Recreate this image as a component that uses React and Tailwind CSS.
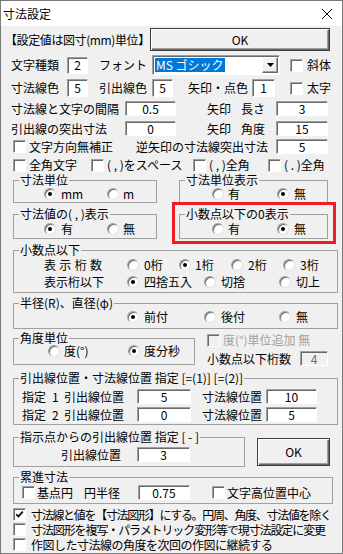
import React from 'react';

const sunken =
  'border border-t-[#a0a0a0] border-l-[#a0a0a0] border-r-white border-b-white shadow-[inset_1px_1px_0_#696969]';
const raised =
  'border border-t-white border-l-white border-r-[#696969] border-b-[#696969] shadow-[inset_-1px_-1px_0_#a0a0a0]';

function Edit({ v, className = '', disabled }) {
  return (
    <div
      className={`shrink-0 flex items-center justify-center ${sunken} ${
        disabled ? 'bg-[#f0f0f0] text-[#6d6d6d]' : 'bg-white'
      } ${className}`}
    >
      {v}
    </div>
  );
}

function Radio({ on }) {
  return (
    <span className="shrink-0 flex items-center justify-center w-[12px] h-[12px] rounded-full bg-white border border-t-[#a0a0a0] border-l-[#a0a0a0] border-r-[#e3e3e3] border-b-[#e3e3e3] shadow-[inset_1px_1px_0_#696969]">
      {on && <span className="w-[4px] h-[4px] rounded-full bg-black" />}
    </span>
  );
}

function Check({ on, disabled }) {
  return (
    <span
      className={`shrink-0 flex items-center justify-center w-[13px] h-[13px] ${sunken} ${
        disabled ? 'bg-[#f0f0f0]' : 'bg-white'
      }`}
    >
      {on && (
        <svg width="9" height="9" viewBox="0 0 9 9">
          <path d="M1.2 4.2 L3.4 6.6 L7.8 1.6" stroke="#000" strokeWidth="1.7" fill="none" />
        </svg>
      )}
    </span>
  );
}

function Group({ label, className = '', children }) {
  return (
    <fieldset className={`shrink-0 border border-[#a0a0a0] ${className}`}>
      <legend className="ml-[5px] px-[1px] leading-[14px] whitespace-nowrap">{label}</legend>
      {children}
    </fieldset>
  );
}

function Btn({ className = '', children }) {
  return (
    <div
      className={`shrink-0 flex items-center justify-center bg-[#f0f0f0] border border-[#3c3c3c] shadow-[inset_1px_1px_0_#fff,inset_-1px_-1px_0_#696969,inset_-2px_-2px_0_#a0a0a0] ${className}`}
    >
      {children}
    </div>
  );
}

export default function App() {
  return (
    <div className="w-[343px] h-[554px] overflow-hidden bg-[#f0f0f0] border border-[#7a7a7a] text-[12px] leading-[14px] text-black font-['Noto_Sans_CJK_JP',sans-serif]">
      {/* title bar */}
      <div className="h-[25px] bg-white flex items-center justify-between pl-[2px] pr-[10px]">
        <span>寸法設定</span>
        <svg width="10" height="10" viewBox="0 0 10 10">
          <path d="M0 0 L10 10 M10 0 L0 10" stroke="#000" strokeWidth="1" />
        </svg>
      </div>

      {/* row 1 */}
      <div className="flex items-center h-[23px] mt-[2px] pl-[4px]">
        <span className="w-[145px] shrink-0 whitespace-nowrap tracking-[-0.4px]">【設定値は図寸(mm)単位】</span>
        <Btn className="w-[180px] h-[23px]">OK</Btn>
      </div>

      {/* row 2 */}
      <div className="flex items-center h-[20px] mt-[4px] pl-[10px]">
        <span className="w-[56px] shrink-0">文字種類</span>
        <Edit v="2" className="w-[21px] h-[17px]" />
        <span className="ml-[11px] w-[53px] shrink-0">フォント</span>
        <div className={`shrink-0 flex items-center w-[128px] h-[20px] bg-white ${sunken}`}>
          <span className="ml-[2px] px-[1px] bg-[#0078d7] text-white leading-[14px]">MS ゴシック</span>
          <div className={`ml-auto mr-[1px] w-[16px] h-[16px] bg-[#f0f0f0] flex items-center justify-center ${raised}`}>
            <svg width="7" height="4" viewBox="0 0 7 4">
              <path d="M0 0 H7 L3.5 4 Z" fill="#000" />
            </svg>
          </div>
        </div>
        <span className="ml-[10px]">
          <Check />
        </span>
        <span className="ml-[4px]">斜体</span>
      </div>

      {/* row 3 */}
      <div className="flex items-center h-[18px] mt-[4px] pl-[10px]">
        <span className="w-[56px] shrink-0">寸法線色</span>
        <Edit v="5" className="w-[21px] h-[18px]" />
        <span className="ml-[11px] w-[53px] shrink-0">引出線色</span>
        <Edit v="5" className="w-[21px] h-[18px]" />
        <span className="ml-[15px] w-[64px] shrink-0">矢印・点色</span>
        <Edit v="1" className="w-[23px] h-[18px]" />
        <span className="ml-[15px]">
          <Check />
        </span>
        <span className="ml-[4px]">太字</span>
      </div>

      {/* row 4 */}
      <div className="flex items-center h-[15px] mt-[4px] pl-[10px]">
        <span className="w-[114px] shrink-0">寸法線と文字の間隔</span>
        <Edit v="0.5" className="w-[51px] h-[15px]" />
        <div className="ml-[31px] w-[69px] shrink-0 flex">
          <span>矢印</span>
          <span className="ml-[10px]">長さ</span>
        </div>
        <Edit v="3" className="w-[52px] h-[15px]" />
      </div>

      {/* row 5 */}
      <div className="flex items-center h-[15px] mt-[5px] pl-[10px]">
        <span className="w-[114px] shrink-0">引出線の突出寸法</span>
        <Edit v="0" className="w-[51px] h-[15px]" />
        <div className="ml-[31px] w-[69px] shrink-0 flex">
          <span>矢印</span>
          <span className="ml-[10px]">角度</span>
        </div>
        <Edit v="15" className="w-[52px] h-[15px]" />
      </div>

      {/* row 6 */}
      <div className="flex items-center h-[15px] mt-[3px] pl-[12px]">
        <Check />
        <span className="ml-[3px] w-[107px] shrink-0">文字方向無補正</span>
        <span className="w-[140px] shrink-0 whitespace-nowrap">逆矢印の寸法線突出寸法</span>
        <Edit v="5" className="w-[52px] h-[15px]" />
      </div>

      {/* row 7 */}
      <div className="flex items-center h-[14px] mt-[4px] pl-[12px]">
        <Check />
        <span className="ml-[3px] w-[62px] shrink-0">全角文字</span>
        <Check />
        <span className="ml-[3px] w-[86px] shrink-0 whitespace-nowrap">( , )をスペース</span>
        <Check />
        <span className="ml-[3px] w-[59px] shrink-0 whitespace-nowrap">( , )全角</span>
        <Check />
        <span className="ml-[3px] whitespace-nowrap">( . )全角</span>
      </div>

      {/* unit groups */}
      <div className="relative flex mt-[1px] pl-[12px]">
        <div className="flex flex-col w-[144px] shrink-0">
          <Group label="寸法単位" className="w-[144px] h-[30px]">
            <div className="flex items-center h-[12px] mt-[1px] pl-[30px]">
              <Radio on />
              <span className="ml-[5px] w-[46px] shrink-0">mm</span>
              <Radio />
              <span className="ml-[4px]">m</span>
            </div>
          </Group>
          <Group label="寸法値の( , )表示" className="mt-[4px] w-[144px] h-[32px]">
            <div className="flex items-center h-[12px] mt-[2px] pl-[30px]">
              <Radio on />
              <span className="ml-[5px] w-[46px] shrink-0">有</span>
              <Radio />
              <span className="ml-[4px]">無</span>
            </div>
          </Group>
        </div>
        <div className="ml-[22px] flex flex-col w-[149px] shrink-0">
          <Group label="寸法単位表示" className="w-[149px] h-[31px]">
            <div className="flex items-center h-[12px] mt-[1px] pl-[32px]">
              <Radio />
              <span className="ml-[4px] w-[49px] shrink-0">有</span>
              <Radio on />
              <span className="ml-[5px]">無</span>
            </div>
          </Group>
          <Group label="小数点以下の0表示" className="mt-[3px] w-[149px] h-[32px]">
            <div className="flex items-center h-[12px] mt-[2px] pl-[32px]">
              <Radio />
              <span className="ml-[4px] w-[49px] shrink-0">有</span>
              <Radio on />
              <span className="ml-[5px]">無</span>
            </div>
          </Group>
        </div>
        <div className="absolute left-[171px] top-[29px] w-[164px] h-[42px] border-[3px] border-[#ed1c24]" />
      </div>

      {/* decimals */}
      <Group label="小数点以下" className="mt-[4px] ml-[12px] w-[325px] h-[50px]">
        <div className="flex items-center h-[14px] mt-[1px] pl-[30px]">
          <div className="w-[83px] shrink-0">
            <div className="w-[58px] flex justify-between">
              <span>表</span>
              <span>示</span>
              <span>桁</span>
              <span>数</span>
            </div>
          </div>
          <Radio />
          <span className="ml-[5px] w-[35px] shrink-0">0桁</span>
          <Radio on />
          <span className="ml-[4px] w-[36px] shrink-0">1桁</span>
          <Radio />
          <span className="ml-[5px] w-[35px] shrink-0">2桁</span>
          <Radio />
          <span className="ml-[5px]">3桁</span>
        </div>
        <div className="flex items-center h-[14px] mt-[3px] pl-[30px]">
          <span className="w-[83px] shrink-0">表示桁以下</span>
          <Radio on />
          <span className="ml-[5px] w-[60px] shrink-0">四捨五入</span>
          <Radio />
          <span className="ml-[5px] w-[58px] shrink-0">切捨</span>
          <Radio />
          <span className="ml-[5px]">切上</span>
        </div>
      </Group>

      {/* radius */}
      <Group label="半径(R)、直径(φ)" className="mt-[3px] ml-[12px] w-[325px] h-[33px]">
        <div className="flex items-center h-[12px] mt-[1px] pl-[113px]">
          <Radio on />
          <span className="ml-[5px] w-[60px] shrink-0">前付</span>
          <Radio />
          <span className="ml-[5px] w-[58px] shrink-0">後付</span>
          <Radio />
          <span className="ml-[5px]">無</span>
        </div>
      </Group>

      {/* angle */}
      <div className="flex mt-[2px] pl-[12px]">
        <Group label="角度単位" className="w-[182px] h-[34px]">
          <div className="flex items-center h-[12px] pl-[34px]">
            <Radio />
            <span className="ml-[4px] w-[64px] shrink-0">度(°)</span>
            <Radio on />
            <span className="ml-[4px]">度分秒</span>
          </div>
        </Group>
        <div className="ml-[12px] flex flex-col">
          <div className="flex items-center h-[14px] mt-[2px]">
            <Check disabled />
            <span className="ml-[3px] text-[#a0a0a0] whitespace-nowrap">度(°)単位追加 無</span>
          </div>
          <div className="flex items-center h-[15px] mt-[4px]">
            <span className="w-[93px] shrink-0">小数点以下桁数</span>
            <Edit v="4" disabled className="w-[28px] h-[15px]" />
          </div>
        </div>
      </div>

      {/* leader positions */}
      <Group label="引出線位置・寸法線位置  指定 [=(1)] [=(2)]" className="mt-[5px] ml-[12px] w-[325px] h-[54px]">
        {[
          ['1', '5', '10'],
          ['2', '0', '5'],
        ].map(([n, a, b], i) => (
          <div key={n} className={`flex items-center h-[15px] pl-[8px] ${i === 0 ? 'mt-[4px]' : 'mt-[3px]'}`}>
            <span className="w-[30px] shrink-0">指定</span>
            <span className="w-[12px] shrink-0">{n}</span>
            <span className="w-[73px] shrink-0">引出線位置</span>
            <Edit v={a} className="w-[54px] h-[15px]" />
            <span className="ml-[11px] w-[64px] shrink-0">寸法線位置</span>
            <Edit v={b} className="w-[51px] h-[15px]" />
          </div>
        ))}
      </Group>

      {/* from point */}
      <div className="flex mt-[5px] pl-[12px]">
        <Group label="指示点からの引出線位置  指定 [ - ]" className="w-[232px] h-[37px]">
          <div className="flex items-center h-[15px] mt-[3px] pl-[47px]">
            <span className="w-[76px] shrink-0">引出線位置</span>
            <Edit v="3" className="w-[53px] h-[15px]" />
          </div>
        </Group>
        <Btn className="ml-[12px] mt-[8px] w-[73px] h-[28px]">OK</Btn>
      </div>

      {/* cumulative */}
      <Group label="累進寸法" className="mt-[3px] ml-[12px] w-[320px] h-[34px]">
        <div className="flex items-center h-[15px] mt-[1px] pl-[8px]">
          <Check />
          <span className="ml-[2px] w-[47px] shrink-0">基点円</span>
          <span className="w-[54px] shrink-0">円半径</span>
          <Edit v="0.75" className="w-[52px] h-[15px]" />
          <span className="ml-[22px]">
            <Check />
          </span>
          <span className="ml-[2px]">文字高位置中心</span>
        </div>
      </Group>

      {/* bottom checks */}
      <div className="flex flex-col mt-[3px] pl-[12px]">
        <div className="flex items-center h-[15px]">
          <Check on />
          <span className="ml-[5px] whitespace-nowrap tracking-[-1.3px]">寸法線と値を【寸法図形】にする。円周、角度、寸法値を除く</span>
        </div>
        <div className="flex items-center h-[15px]">
          <Check />
          <span className="ml-[5px] whitespace-nowrap tracking-[-1.1px]">寸法図形を複写・パラメトリック変形等で現寸法設定に変更</span>
        </div>
        <div className="flex items-center h-[15px]">
          <Check />
          <span className="ml-[5px] whitespace-nowrap tracking-[-0.5px]">作図した寸法線の角度を次回の作図に継続する</span>
        </div>
      </div>
    </div>
  );
}
